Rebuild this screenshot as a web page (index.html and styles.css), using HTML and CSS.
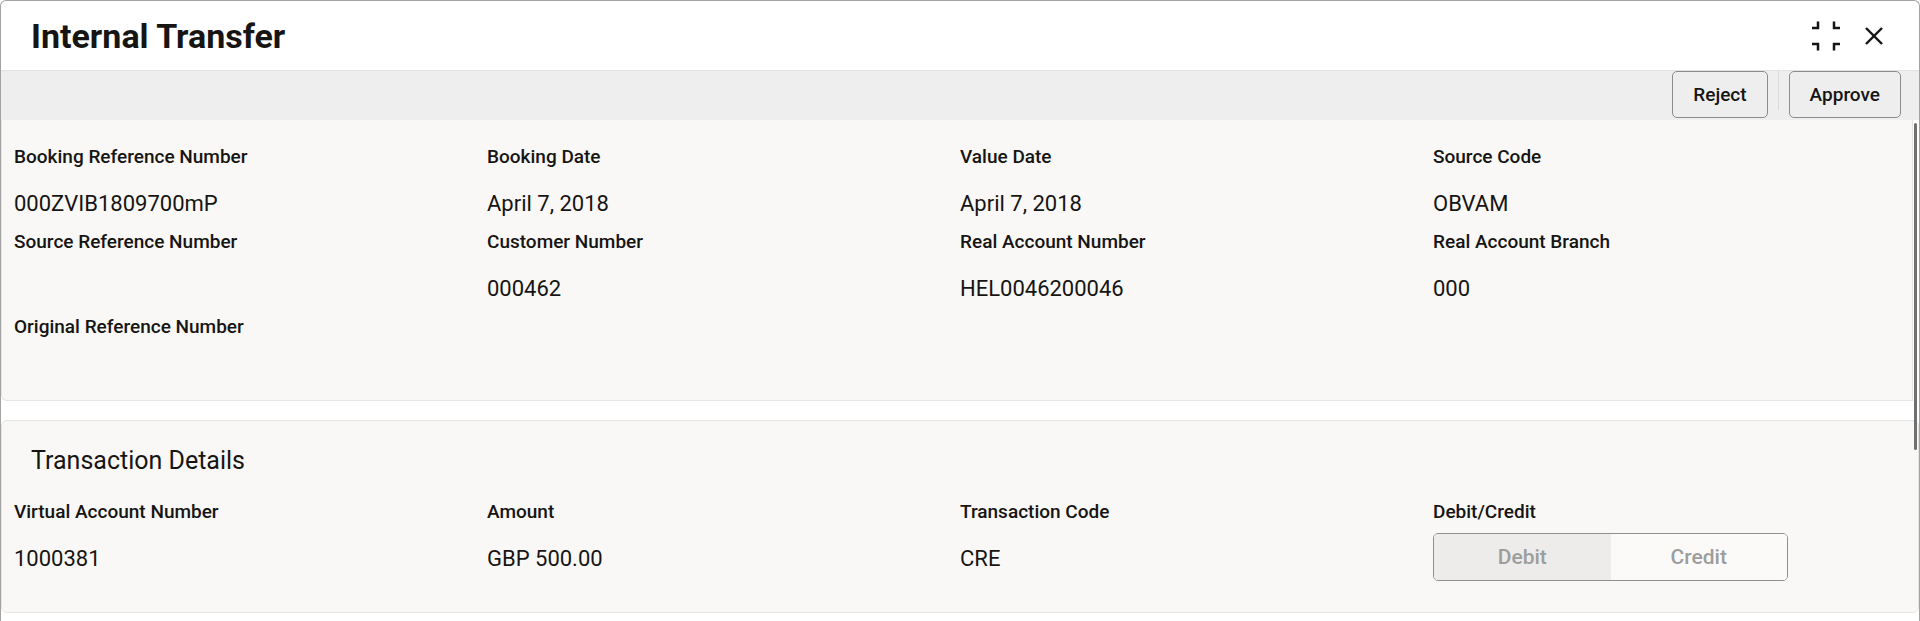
FILE: index.html
```html
<!DOCTYPE html>
<html lang="en">
<head>
    <meta charset="UTF-8">
    <meta name="viewport" content="width=device-width, initial-scale=1.0">
    <title>Internal Transfer</title>
    <link rel="stylesheet" href="styles.css">
</head>
<body>
    <div class="dialog">
        <header class="dialog-header">
            <h1>Internal Transfer</h1>
            <div class="header-actions">
                <!-- restore / un-maximize -->
                <svg class="icon-compress" width="30" height="30" viewBox="0 0 30 30" fill="none" stroke="#161513" stroke-width="2.5">
                    <path d="M1 7 H7 V0.5"/>
                    <path d="M23 0.5 V7 H29"/>
                    <path d="M1 23 H7 V29.5"/>
                    <path d="M29 23 H23 V29.5"/>
                </svg>
                <svg class="icon-close" width="20" height="20" viewBox="0 0 20 20" fill="none" stroke="#161513" stroke-width="2.4">
                    <path d="M2 2 L18 18"/>
                    <path d="M18 2 L2 18"/>
                </svg>
            </div>
        </header>

        <div class="toolbar">
            <button class="tb-button">Reject</button>
            <span class="tb-sep"></span>
            <button class="tb-button">Approve</button>
        </div>

        <div class="dialog-body">
            <section class="card card-main">
                <div class="field-grid">
                    <div class="field">
                        <div class="field-label">Booking Reference Number</div>
                        <div class="field-value">000ZVIB1809700mP</div>
                    </div>
                    <div class="field">
                        <div class="field-label">Booking Date</div>
                        <div class="field-value">April 7, 2018</div>
                    </div>
                    <div class="field">
                        <div class="field-label">Value Date</div>
                        <div class="field-value">April 7, 2018</div>
                    </div>
                    <div class="field">
                        <div class="field-label">Source Code</div>
                        <div class="field-value">OBVAM</div>
                    </div>

                    <div class="field">
                        <div class="field-label">Source Reference Number</div>
                        <div class="field-value"></div>
                    </div>
                    <div class="field">
                        <div class="field-label">Customer Number</div>
                        <div class="field-value">000462</div>
                    </div>
                    <div class="field">
                        <div class="field-label">Real Account Number</div>
                        <div class="field-value">HEL0046200046</div>
                    </div>
                    <div class="field">
                        <div class="field-label">Real Account Branch</div>
                        <div class="field-value">000</div>
                    </div>

                    <div class="field">
                        <div class="field-label">Original Reference Number</div>
                        <div class="field-value"></div>
                    </div>
                </div>
            </section>

            <section class="card card-txn">
                <h2>Transaction Details</h2>
                <div class="field-grid">
                    <div class="field">
                        <div class="field-label">Virtual Account Number</div>
                        <div class="field-value">1000381</div>
                    </div>
                    <div class="field">
                        <div class="field-label">Amount</div>
                        <div class="field-value">GBP 500.00</div>
                    </div>
                    <div class="field">
                        <div class="field-label">Transaction Code</div>
                        <div class="field-value">CRE</div>
                    </div>
                    <div class="field">
                        <div class="field-label">Debit/Credit</div>
                        <div class="toggle">
                            <span class="toggle-opt selected">Debit</span>
                            <span class="toggle-opt">Credit</span>
                        </div>
                    </div>
                </div>
            </section>

            <div class="scroll-thumb"></div>
        </div>
    </div>
</body>
</html>
```

FILE: styles.css
```css
* {
    margin: 0;
    padding: 0;
    box-sizing: border-box;
}

body {
    font-family: Roboto, 'Noto Sans', sans-serif;
    color: #161513;
    background: #fff;
    overflow: hidden;
}

.dialog {
    height: 100vh;
    border: 1px solid #a3a3a3;
    border-bottom: none;
    border-radius: 6px 6px 0 0;
    overflow: hidden;
    background: #fff;
}

/* title bar */
.dialog-header {
    height: 69px;
    display: flex;
    align-items: center;
    justify-content: space-between;
    padding: 0 35px 0 30px;
}

.dialog-header h1 {
    font-size: 34px;
    font-weight: 700;
    line-height: 40px;
    margin-top: 1px;
}

.header-actions {
    display: flex;
    align-items: center;
    gap: 23px;
}

.icon-compress {
    margin-top: 1px;
}

/* action strip */
.toolbar {
    height: 50px;
    background: #eeeeee;
    border-top: 1px solid #e2e2e2;
    display: flex;
    justify-content: flex-end;
    align-items: flex-start;
    padding-right: 18px;
}

.tb-button {
    height: 47px;
    padding: 0 20px;
    font-family: inherit;
    font-size: 19px;
    font-weight: 500;
    color: #161513;
    background: #eeeeee;
    border: 1px solid #8c8c8c;
    border-radius: 5px;
    cursor: pointer;
}

.tb-sep {
    width: 1px;
    height: 39px;
    background: #dadada;
    margin: 0 10px;
}

/* form body */
.dialog-body {
    position: relative;
}

.card {
    background: #f9f8f6;
    border: 1px solid #e7e5e2;
}

.card-main {
    border-top: none;
    border-radius: 0 0 0 6px;
    margin-right: 6px;
    padding: 25px 0 0 12px;
}

.card-txn {
    margin-top: 19px;
    border-radius: 6px;
    padding: 24px 0 20px 12px;
}

.card-txn h2 {
    font-size: 25px;
    font-weight: 400;
    line-height: 32px;
    padding-left: 17px;
    margin-bottom: 23px;
}

.field-grid {
    display: grid;
    grid-template-columns: repeat(4, 473px);
}

.field {
    margin-bottom: 11px;
}

.field-label {
    font-size: 19px;
    font-weight: 500;
    line-height: 24px;
}

.field-value {
    font-size: 22px;
    line-height: 30px;
    min-height: 30px;
    margin-top: 20px;
}

/* debit / credit switch */
.toggle {
    margin-top: 9px;
    width: 355px;
    height: 48px;
    display: grid;
    grid-template-columns: 1fr 1fr;
    border: 1px solid #8f8f8f;
    border-radius: 5px;
    overflow: hidden;
}

.toggle-opt {
    display: flex;
    align-items: center;
    justify-content: center;
    font-size: 21px;
    font-weight: 500;
    color: #9d9d9d;
    background: #fbfaf9;
}

.toggle-opt.selected {
    background: #edecea;
}

.scroll-thumb {
    position: absolute;
    top: 3px;
    right: 2px;
    width: 3px;
    height: 327px;
    border-radius: 2px;
    background: #707070;
}
```
